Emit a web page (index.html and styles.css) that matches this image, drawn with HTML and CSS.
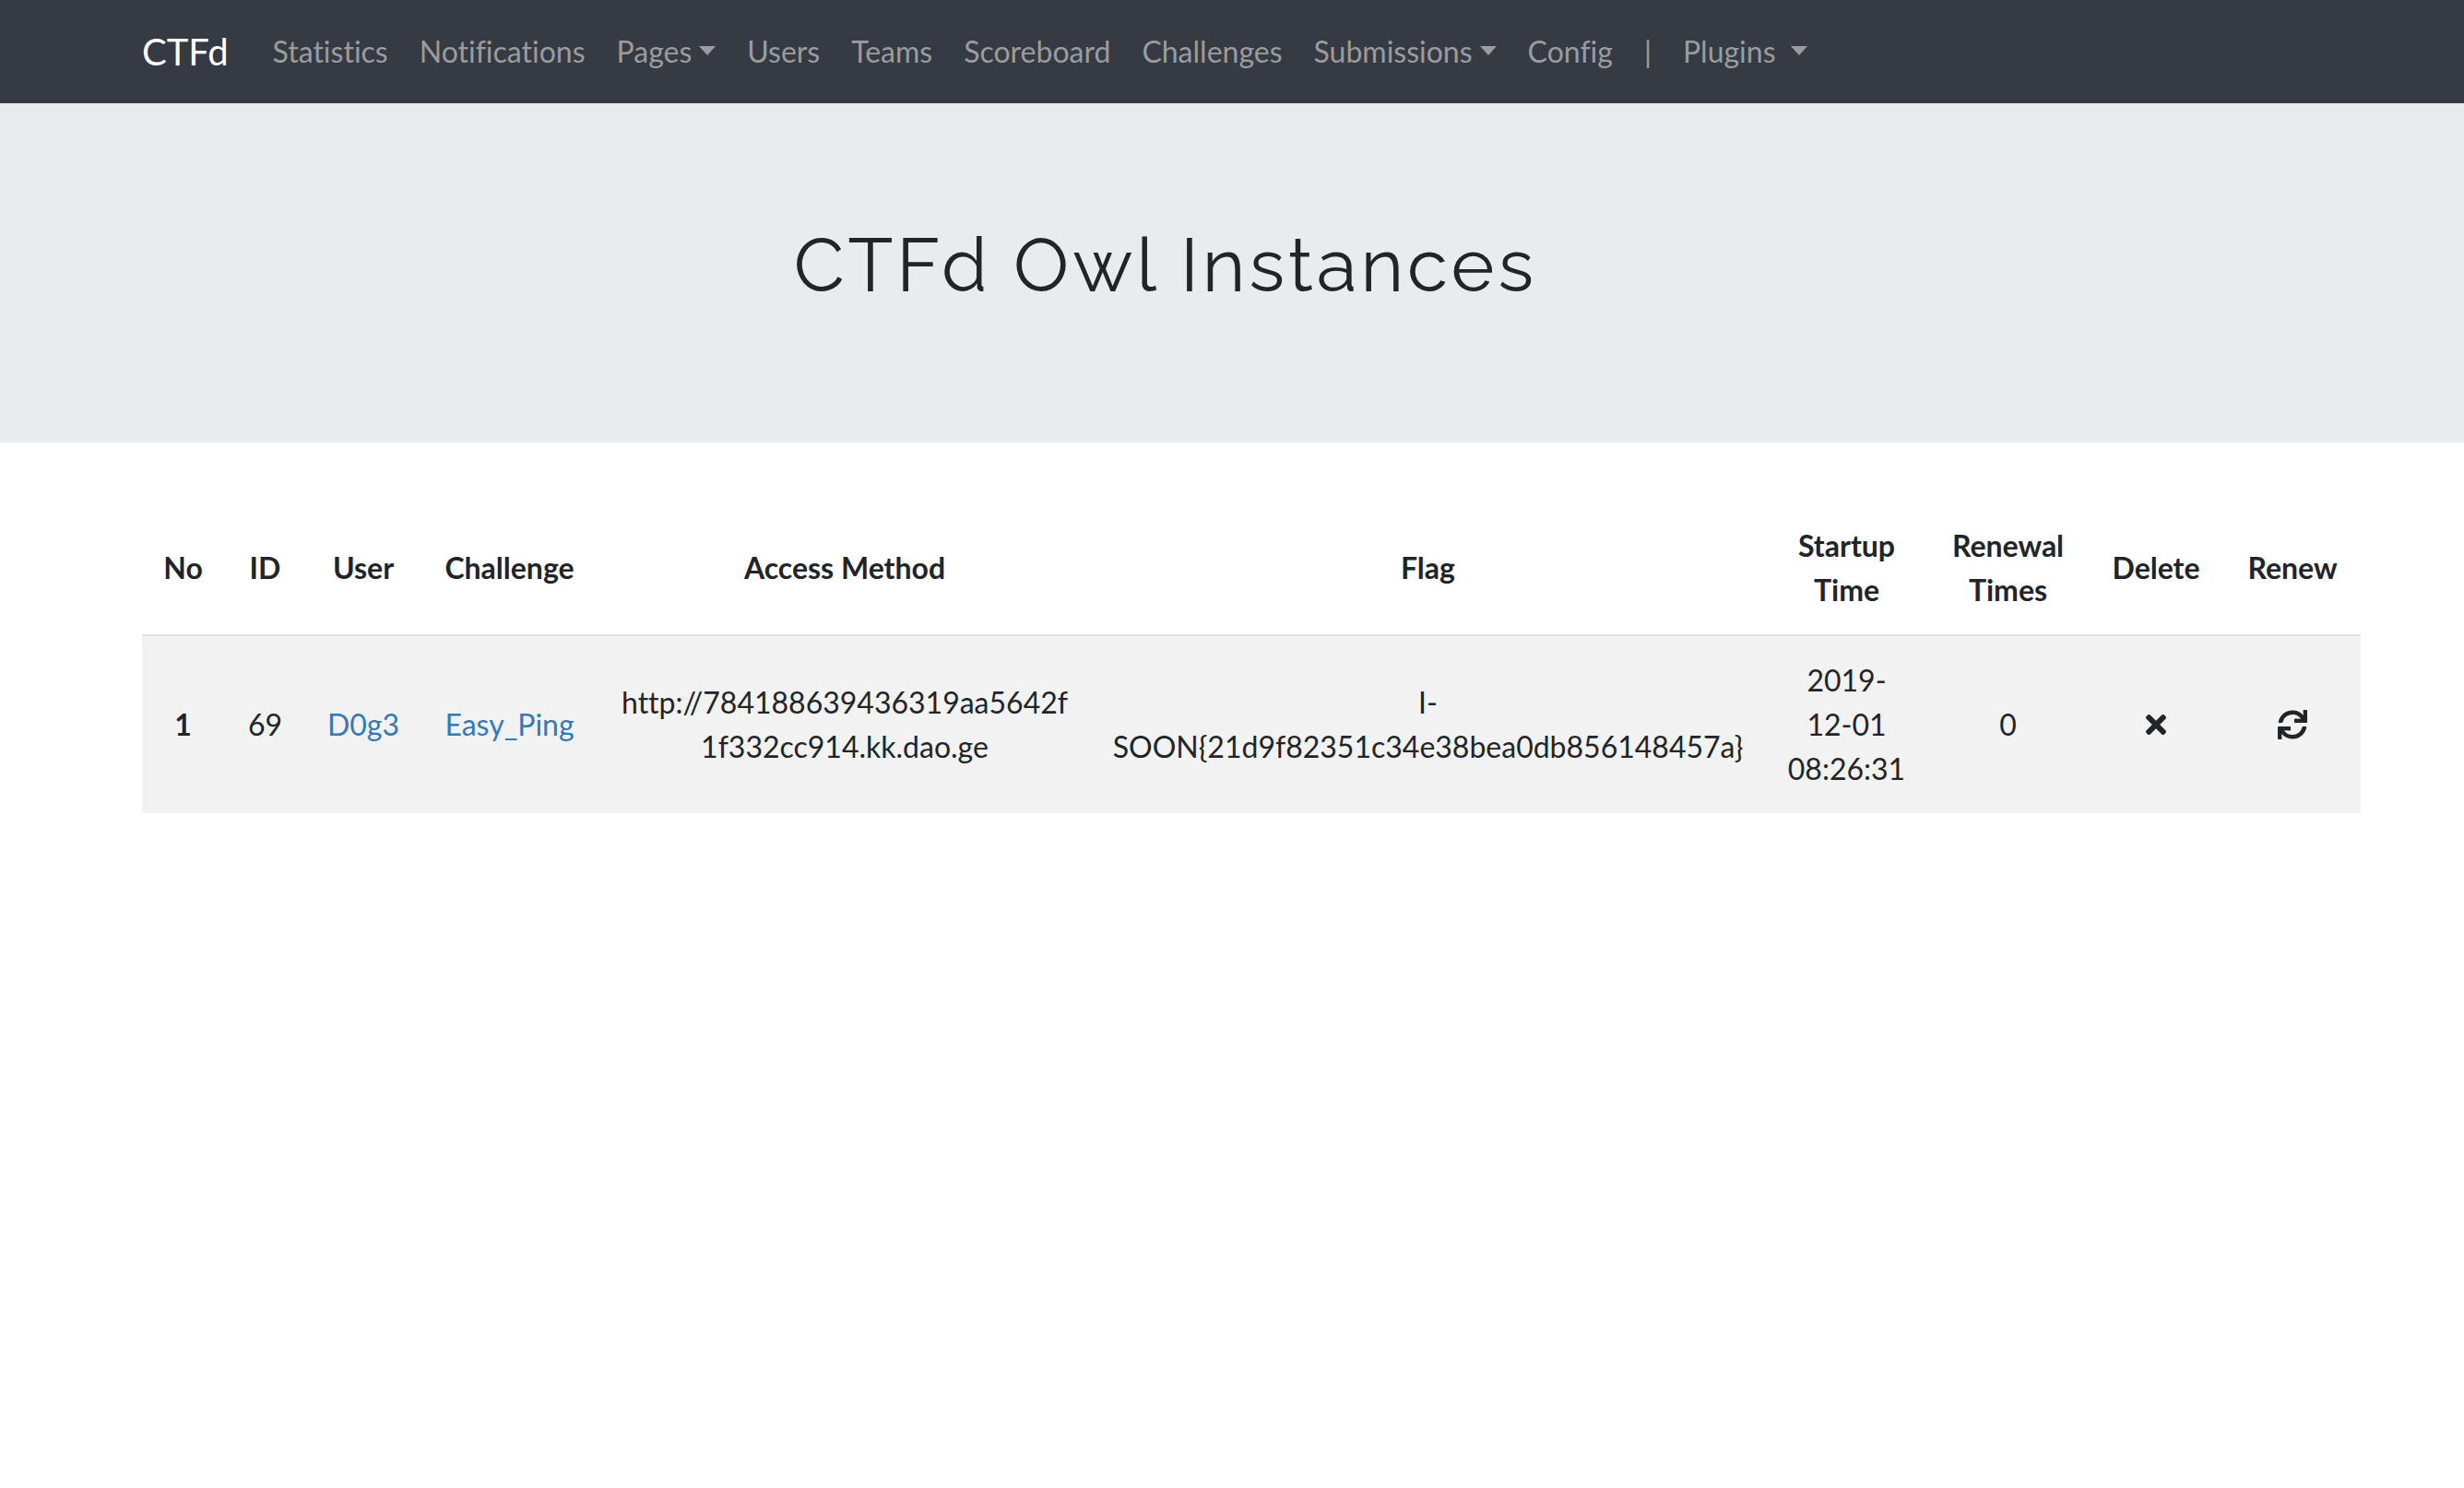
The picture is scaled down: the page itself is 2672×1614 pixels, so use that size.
FILE: index.html
```html
<!DOCTYPE html>
<html lang="en">
<head>
  <meta charset="utf-8">
  <meta name="viewport" content="width=device-width, initial-scale=1">
  <title>CTFd Owl Instances</title>
  <link rel="stylesheet" href="styles.css">
</head>
<body>
  <nav class="navbar">
    <a class="navbar-brand" href="#">CTFd</a>
    <ul class="navbar-nav">
      <li><a class="nav-link" href="#">Statistics</a></li>
      <li><a class="nav-link" href="#">Notifications</a></li>
      <li><a class="nav-link dropdown-toggle" href="#">Pages</a></li>
      <li><a class="nav-link" href="#">Users</a></li>
      <li><a class="nav-link" href="#">Teams</a></li>
      <li><a class="nav-link" href="#">Scoreboard</a></li>
      <li><a class="nav-link" href="#">Challenges</a></li>
      <li><a class="nav-link dropdown-toggle" href="#">Submissions</a></li>
      <li><a class="nav-link" href="#">Config</a></li>
      <li><span class="nav-link">|</span></li>
      <li><a class="nav-link dropdown-toggle" href="#">Plugins&nbsp;</a></li>
    </ul>
  </nav>

  <header class="jumbotron">
    <h1 class="title">CTFd Owl Instances</h1>
  </header>

  <main class="content">
    <table class="table">
      <thead>
        <tr>
          <th class="col-no" scope="col">No</th>
          <th class="col-id" scope="col">ID</th>
          <th class="col-user" scope="col">User</th>
          <th class="col-challenge" scope="col">Challenge</th>
          <th class="col-access" scope="col">Access Method</th>
          <th scope="col">Flag</th>
          <th class="col-startup" scope="col">Startup Time</th>
          <th class="col-renewal" scope="col">Renewal Times</th>
          <th class="col-action" scope="col">Delete</th>
          <th class="col-action" scope="col">Renew</th>
        </tr>
      </thead>
      <tbody>
        <tr>
          <th scope="row">1</th>
          <td>69</td>
          <td><a class="link" href="#">D0g3</a></td>
          <td><a class="link" href="#">Easy_Ping</a></td>
          <td>http://784188639436319aa5642f<wbr>1f332cc914.kk.dao.ge</td>
          <td>I-<wbr>SOON{21d9f82351c34e38bea0db856148457a}</td>
          <td>2019-<wbr>12-01 08:26:31</td>
          <td>0</td>
          <td>
            <button class="icon-button" type="button" aria-label="Delete">
              <svg class="icon" viewBox="0 0 352 512" aria-hidden="true"><path d="M242.72 256l100.07-100.07c12.28-12.28 12.28-32.19 0-44.48l-22.24-22.24c-12.28-12.28-32.19-12.28-44.48 0L176 189.28 75.93 89.21c-12.28-12.28-32.19-12.28-44.48 0L9.21 111.45c-12.28 12.28-12.28 32.19 0 44.48L109.28 256 9.21 356.07c-12.28 12.28-12.28 32.19 0 44.48l22.24 22.24c12.28 12.28 32.2 12.28 44.48 0L176 322.72l100.07 100.07c12.28 12.28 32.2 12.28 44.48 0l22.24-22.24c12.28-12.28 12.28-32.19 0-44.48L242.72 256z"/></svg>
            </button>
          </td>
          <td>
            <button class="icon-button" type="button" aria-label="Renew">
              <svg class="icon" viewBox="0 0 512 512" aria-hidden="true"><path d="M440.65 12.57l4 82.77A247.16 247.16 0 0 0 255.83 8C134.73 8 33.91 94.92 12.29 209.82A12 12 0 0 0 24.09 224h49.05a12 12 0 0 0 11.67-9.26 175.91 175.91 0 0 1 317-56.94l-101.46-4.86a12 12 0 0 0-12.57 12v47.41a12 12 0 0 0 12 12H500a12 12 0 0 0 12-12V12a12 12 0 0 0-12-12h-47.37a12 12 0 0 0-11.98 12.57zM255.83 432a175.61 175.61 0 0 1-146-77.8l101.8 4.87a12 12 0 0 0 12.57-12v-47.4a12 12 0 0 0-12-12H12a12 12 0 0 0-12 12V500a12 12 0 0 0 12 12h47.35a12 12 0 0 0 12-12.6l-4.15-82.57A247.17 247.17 0 0 0 255.83 504c121.11 0 221.93-86.92 243.55-201.82a12 12 0 0 0-11.8-14.18h-49.05a12 12 0 0 0-11.67 9.26A175.86 175.86 0 0 1 255.83 432z"/></svg>
            </button>
          </td>
        </tr>
      </tbody>
    </table>
  </main>
</body>
</html>
```
FILE: styles.css
```css
*,
*::before,
*::after {
  box-sizing: border-box;
}

body {
  margin: 0;
  background: #fff;
  color: #212529;
  font-family: Lato, "Noto Sans", sans-serif;
  font-size: 32px;
  font-variant-ligatures: no-common-ligatures;
  line-height: 48px;
}

.navbar {
  display: flex;
  align-items: center;
  padding: 16px 112px 16px 154px;
  background: #363a42;
}

.navbar-brand {
  margin-right: 32px;
  color: #fff;
  font-size: 40px;
  text-decoration: none;
}

.navbar-nav {
  display: flex;
  gap: 2px;
  margin: 0;
  padding: 0;
  list-style: none;
}

.nav-link {
  display: block;
  padding: 16px;
  color: #9a9c9f;
  text-decoration: none;
  white-space: nowrap;
}

.dropdown-toggle::after {
  content: "";
  display: inline-block;
  margin-left: 8px;
  vertical-align: 8px;
  border-top: 10px solid;
  border-right: 9px solid transparent;
  border-left: 9px solid transparent;
}

.jumbotron {
  padding: 128px 298px 144px 154px;
  background: #e8ecef;
  text-align: center;
}

.title {
  margin: 0;
  font-family: Raleway, Lato, sans-serif;
  font-size: 80px;
  font-weight: 400;
  letter-spacing: 4px;
  line-height: 96px;
}

.content {
  padding: 64px 112px 64px 154px;
}

.table {
  width: 100%;
  table-layout: fixed;
  border-collapse: separate;
  border-spacing: 0;
  text-align: center;
}

.table th,
.table td {
  padding: 24px 22px;
  vertical-align: middle;
}

.table thead th {
  border-bottom: 2px solid #dee2e6;
}

.table tbody tr {
  background: #f2f2f2;
}

.col-no,
.col-id {
  width: 89px;
}

.col-user {
  width: 124px;
}

.col-challenge {
  width: 193px;
}

.col-access {
  width: 534px;
}

.col-startup {
  width: 177px;
}

.col-renewal {
  width: 173px;
}

.col-action {
  width: 148px;
}

.link {
  color: #337ab7;
  text-decoration: none;
}

.icon-button {
  display: flex;
  margin: 0 auto;
  padding: 0;
  border: 0;
  background: none;
  color: inherit;
  cursor: pointer;
}

.icon {
  height: 32px;
  fill: currentColor;
}
```
